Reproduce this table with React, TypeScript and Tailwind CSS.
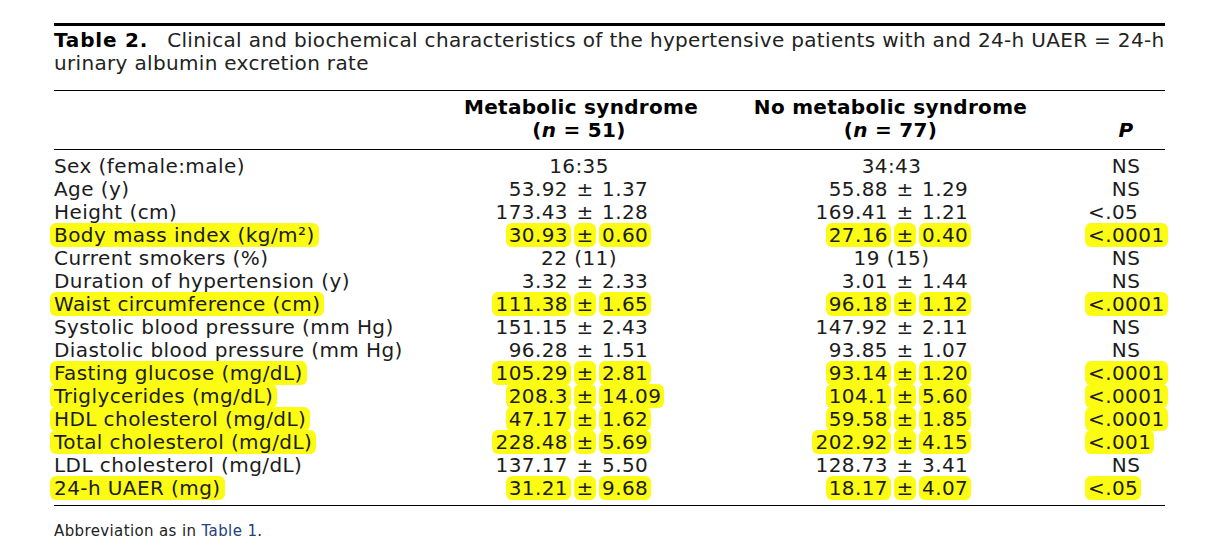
import React from "react";

type Row = {
  label: React.ReactNode;
  a: [string, string] | string;
  b: [string, string] | string;
  p: string;
  hl?: boolean;
};

const rows: Row[] = [
  { label: "Sex (female:male)", a: "16:35", b: "34:43", p: "NS" },
  { label: "Age (y)", a: ["53.92", "1.37"], b: ["55.88", "1.29"], p: "NS" },
  { label: "Height (cm)", a: ["173.43", "1.28"], b: ["169.41", "1.21"], p: "<.05" },
  { label: "Body mass index (kg/m²)", a: ["30.93", "0.60"], b: ["27.16", "0.40"], p: "<.0001", hl: true },
  { label: "Current smokers (%)", a: "22 (11)", b: "19 (15)", p: "NS" },
  { label: "Duration of hypertension (y)", a: ["3.32", "2.33"], b: ["3.01", "1.44"], p: "NS" },
  { label: "Waist circumference (cm)", a: ["111.38", "1.65"], b: ["96.18", "1.12"], p: "<.0001", hl: true },
  { label: "Systolic blood pressure (mm Hg)", a: ["151.15", "2.43"], b: ["147.92", "2.11"], p: "NS" },
  { label: "Diastolic blood pressure (mm Hg)", a: ["96.28", "1.51"], b: ["93.85", "1.07"], p: "NS" },
  { label: "Fasting glucose (mg/dL)", a: ["105.29", "2.81"], b: ["93.14", "1.20"], p: "<.0001", hl: true },
  { label: "Triglycerides (mg/dL)", a: ["208.3", "14.09"], b: ["104.1", "5.60"], p: "<.0001", hl: true },
  { label: "HDL cholesterol (mg/dL)", a: ["47.17", "1.62"], b: ["59.58", "1.85"], p: "<.0001", hl: true },
  { label: "Total cholesterol (mg/dL)", a: ["228.48", "5.69"], b: ["202.92", "4.15"], p: "<.001", hl: true },
  { label: "LDL cholesterol (mg/dL)", a: ["137.17", "5.50"], b: ["128.73", "3.41"], p: "NS" },
  { label: "24-h UAER (mg)", a: ["31.21", "9.68"], b: ["18.17", "4.07"], p: "<.05", hl: true },
];

function Hl({ on, wide, children }: { on?: boolean; wide?: boolean; children: React.ReactNode }) {
  if (!on) return <>{children}</>;
  return (
    <span className={`rounded-[6px] bg-[#fbfb14] ${wide ? "-mx-[4px] px-[4px]" : "-mx-[3px] px-[3px]"}`}>
      {children}
    </span>
  );
}

function Values({ v, hl, second }: { v: [string, string] | string; hl?: boolean; second?: boolean }) {
  if (typeof v === "string") {
    return (
      <div className={`col-span-3 text-center ${second ? "pl-[8px]" : ""}`}>
        <Hl on={hl}>{v}</Hl>
      </div>
    );
  }
  return (
    <>
      <div className="text-right">
        <Hl on={hl}>{v[0]}</Hl>
      </div>
      <div className="text-center tracking-normal">
        <Hl on={hl}>±</Hl>
      </div>
      <div className="text-left">
        <Hl on={hl}>{v[1]}</Hl>
      </div>
    </>
  );
}

export default function App() {
  return (
    <div
      className="min-h-[546px] bg-white text-[#1c1c1c]"
      style={{ fontFamily: '"DejaVu Sans", Verdana, sans-serif' }}
    >
      <div className="ml-[54px] w-[1111px] pt-[23px]">
        <div className="h-[3px] bg-black" />

        <p className="mt-[3px] whitespace-nowrap text-[20px] leading-[23px] tracking-[0.33px] text-[#222]">
          <b className="tracking-[0.8px] text-black">Table 2.</b>
          <span className="ml-[19px]">
            Clinical and biochemical characteristics of the hypertensive patients with and 24-h UAER = 24-h
          </span>
          <br />
          urinary albumin excretion rate
        </p>

        <div className="mt-[15px] h-px bg-black" />

        <div className="grid grid-cols-[410px_230px_1fr_78px] whitespace-nowrap pt-[5px] pb-[7px] text-[20px] font-bold leading-[23px] tracking-[0.3px] text-black">
          <div />
          <div className="text-center">
            Metabolic syndrome
            <br />(<i>n</i> = 51)
          </div>
          <div className="text-center">
            No metabolic syndrome
            <br />(<i>n</i> = 77)
          </div>
          <div className="flex items-end justify-center">
            <i>P</i>
          </div>
        </div>

        <div className="h-px bg-black" />

        <div className="pt-[5px] pb-[5px] text-[20px] leading-[23px] tracking-[0.42px]">
          {rows.map((r, i) => (
            <div
              key={i}
              className="grid grid-cols-[416px_98px_34px_86px_200px_34px_165px_78px] whitespace-nowrap"
            >
              <div>
                <Hl on={r.hl} wide>
                  {r.label}
                </Hl>
              </div>
              <Values v={r.a} hl={r.hl} />
              <Values v={r.b} hl={r.hl} second />
              <div className={r.p === "NS" ? "text-center" : "pl-[1px] text-left"}>
                <Hl on={r.hl}>{r.p}</Hl>
              </div>
            </div>
          ))}
        </div>

        <div className="h-px bg-black" />

        <p className="mt-[15px] text-[15px] leading-[20px] tracking-[0.38px] text-[#222]">
          Abbreviation as in <span className="text-[#24407c]">Table 1</span>.
        </p>
      </div>
    </div>
  );
}
